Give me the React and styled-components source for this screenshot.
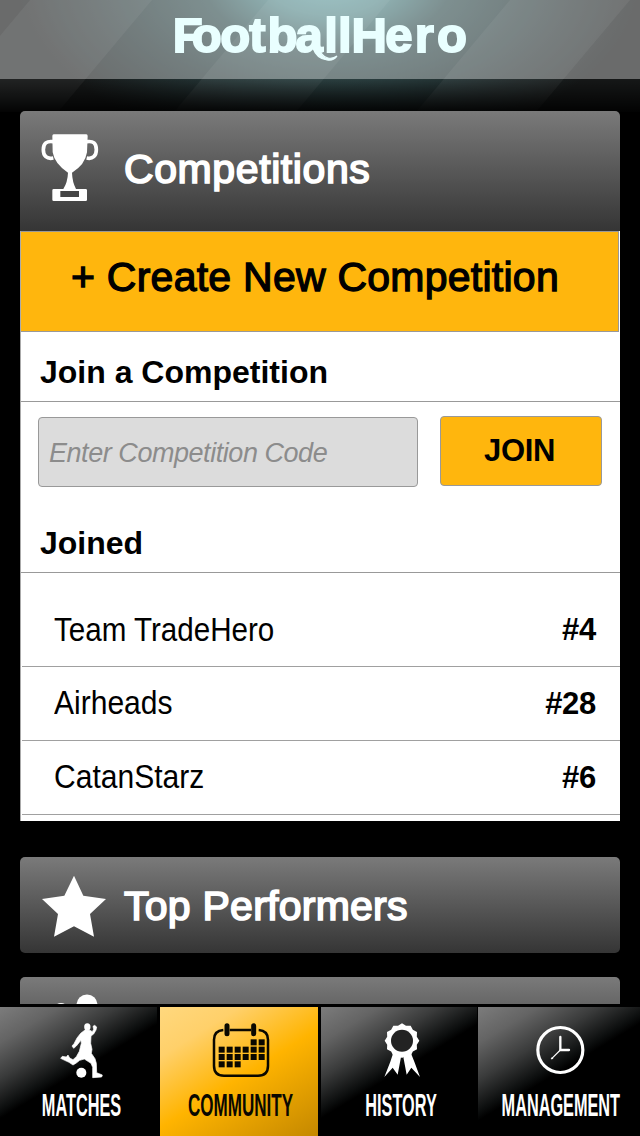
import React from "react";
import styled, { createGlobalStyle } from "styled-components";

const Global = createGlobalStyle`
  * { box-sizing: border-box; }
  body { margin: 0; background: #000; font-family: "Liberation Sans", Arial, sans-serif; }
`;

const Screen = styled.div`
  position: relative;
  width: 640px;
  height: 1136px;
  overflow: hidden;
  display: flex;
  flex-direction: column;
  background: #000;
`;

const Backdrop = styled.svg`
  position: absolute;
  inset: 0 auto auto 0;
`;

const Header = styled.header`
  position: relative;
  flex: none;
  height: 79px;
  background: rgba(255, 255, 255, 0.36);
`;

const Content = styled.main`
  position: relative;
  flex: none;
  height: 925px;
  padding: 32px 20px 0;
  overflow: hidden;
`;

const PanelHeader = styled.div`
  display: flex;
  align-items: center;
  height: ${(p) => p.$height}px;
  padding-left: 20px;
  padding-bottom: ${(p) => (p.$open ? 6 : 0)}px;
  border-radius: ${(p) => (p.$open ? "5px 5px 0 0" : "5px")};
  background: linear-gradient(#7a7a7a, #353535);
`;

const PanelIcon = styled.svg`
  flex: none;
  width: 68px;
  height: 70px;
`;

const PanelTitle = styled.h2`
  margin: 2px 0 0 16px;
  color: #fff;
  font-size: 41px;
  line-height: 46px;
  font-weight: 400;
  letter-spacing: ${(p) => p.$tracking}px;
  -webkit-text-stroke: 1.7px #fff;
`;

const Card = styled.section`
  height: 590px;
  margin-bottom: 36px;
  background: #fff;
  border-left: 1px solid #aaa;
  overflow: hidden;
`;

const CreateButton = styled.button`
  display: block;
  width: 598px;
  height: 101px;
  padding: 0 9px 10px 0;
  border: 1px solid #999;
  border-left: 0;
  background: #ffb60d;
  color: #000;
  font: 400 41px/46px "Liberation Sans", Arial, sans-serif;
  letter-spacing: 0.25px;
  -webkit-text-stroke: 1.3px #000;
`;

const SectionTitle = styled.h3`
  height: ${(p) => p.$height}px;
  margin: 0;
  padding: ${(p) => p.$top}px 0 0 19px;
  border-bottom: 1px solid #999;
  font-size: 32px;
  line-height: 36px;
  font-weight: 700;
`;

const JoinForm = styled.div`
  display: flex;
  gap: 22px;
  height: 117px;
  padding: 14px 0 0 17px;
`;

const CodeInput = styled.input`
  width: 380px;
  height: 70px;
  margin-top: 1px;
  padding: 2px 10px 0 10px;
  border: 1px solid #999;
  border-radius: 4px;
  outline: 0;
  background: #dcdcdc;
  font: italic 27px "Liberation Sans", Arial, sans-serif;
  letter-spacing: -0.45px;
  &::placeholder { color: #8c8c8c; opacity: 1; }
`;

const JoinButton = styled.button`
  width: 162px;
  height: 70px;
  padding: 0 3px 0 0;
  border: 1px solid #999;
  border-radius: 4px;
  background: #ffb60d;
  color: #000;
  font: 700 31px "Liberation Sans", Arial, sans-serif;
  letter-spacing: -0.4px;
`;

const TeamRow = styled.div`
  display: flex;
  justify-content: space-between;
  align-items: flex-end;
  height: ${(p) => p.$height}px;
  margin-left: 1px;
  padding: 0 24px 18px 32px;
  border-bottom: 1px solid #a0a0a0;
  line-height: 36px;
`;

const TeamName = styled.span`
  padding-bottom: ${(p) => p.$lift}px;
  font-size: 33px;
  transform: scaleX(${(p) => p.$squeeze});
  transform-origin: left;
`;

const Rank = styled.b`
  font-size: 31px;
  letter-spacing: -0.3px;
`;

const Spacer = styled.div`
  height: 24px;
`;

const NavBar = styled.nav`
  position: relative;
  flex: none;
  display: grid;
  grid-template-columns: 157px 158px 156px 162px;
  column-gap: 3px;
  height: 132px;
  padding-top: 3px;
  background: #000;
  & > :last-child { margin-left: -2px; }
`;

const Tab = styled.div`
  display: flex;
  flex-direction: column;
  align-items: center;
  padding-left: ${(p) => p.$offset || 0}px;
  color: ${(p) => (p.$active ? "#0a0800" : "#fff")};
  background: ${(p) =>
    p.$active
      ? "linear-gradient(148deg, #ffd87e 0%, #ffd06a 22%, #ffb400 53%, #c48800 100%)"
      : "linear-gradient(149deg, #7c7c7c 0%, #646464 16%, #3a3b3b 32%, #0c0e0e 46%, #000 50%)"};
`;

const TabIcon = styled.svg`
  flex: none;
  width: 70px;
  height: 70px;
  margin-top: 8px;
`;

const TabLabel = styled.span`
  margin-top: 4px;
  font-size: 31px;
  line-height: 34px;
  font-weight: 700;
  white-space: nowrap;
  transform: scaleX(${(p) => p.$squeeze});
`;

const rosette = Array.from({ length: 24 }, (_, i) => {
  const r = i % 2 ? 46 : 52;
  const a = (i * Math.PI) / 12;
  return `${245 + r * Math.cos(a)},${153 + r * Math.sin(a)}`;
}).join(" ");

const days = [
  [4, 5],
  [0, 1, 2, 3, 4, 5],
  [0, 1, 2, 3, 4, 5],
  [0, 1, 2],
];

const Stage = () => (
  <Backdrop width="640" height="112">
    <defs>
      <radialGradient id="glow" gradientUnits="userSpaceOnUse" cx="0" cy="0" r="1" gradientTransform="translate(328 -20) scale(310 175)">
        <stop offset="0" stopColor="#5f9fa2" />
        <stop offset="0.2" stopColor="#508587" />
        <stop offset="0.4" stopColor="#355152" />
        <stop offset="0.7" stopColor="#233233" />
        <stop offset="1" stopColor="#161818" />
      </radialGradient>
      <linearGradient id="fade" x1="0" y1="0" x2="0" y2="1">
        <stop offset="0.7" stopColor="#000" stopOpacity="0" />
        <stop offset="1" stopColor="#000" stopOpacity="0.9" />
      </linearGradient>
    </defs>
    <rect width="640" height="112" fill="url(#glow)" />
    <g fill="#fff" fillOpacity="0.055">
      <path d="M30 0H152L58 112H-64Z" />
      <path d="M268 0H390L296 112H174Z" />
      <path d="M510 0H630L536 112H416Z" />
    </g>
    <rect width="640" height="112" fill="url(#fade)" />
  </Backdrop>
);

const Logo = () => (
  <svg width="640" height="79">
    <g fill="#e9ffff" stroke="#e9ffff">
      <text
        y="47.7"
        x="158.4 175.9 202 228.6 245.4 271.2 297.4 310 322.6 353.5 380.6 401"
        transform="scale(1.09 1.08)"
        fontFamily="Liberation Sans"
        fontWeight="700"
        fontSize="45"
        strokeWidth="1.7"
      >
        FootballHero
      </text>
      <path strokeWidth="1.2" d="M317 44C319 51 322 57 328 58Q333 59 337 56Q334 61 327 60C320 59 315 54 313 48Z" />
    </g>
  </svg>
);

const Trophy = () => (
  <PanelIcon viewBox="120 97 204 210">
    <g fill="none" stroke="#fff" strokeWidth="11">
      <path d="M160 123C140 120 130 128 130 147S140 176 160 172" />
      <path d="M260 123C280 120 289 128 289 147S278 176 260 172" />
    </g>
    <path fill="#fff" d="M161 101H259Q263 101 263 106L261 155Q255 193 216 216Q217 244 228 265H257Q261 265 261 269V297Q261 301 257 301H161Q157 301 157 297V269Q157 265 161 265H190Q203 244 204 216Q164 190 158 155L157 106Q157 101 161 101Z" />
    <path fill="#454545" d="M181 271H237V289H181Z" />
  </PanelIcon>
);

const Star = () => (
  <PanelIcon viewBox="120 91 204 210">
    <path fill="#fff" d="M222 108L250 168L318 178L270 223L282 291L222 260L162 291L174 223L126 178L193 168Z" />
  </PanelIcon>
);

const Player = () => (
  <TabIcon viewBox="17 15 210 210" fill="currentColor">
    <ellipse cx="141" cy="51" rx="9.5" ry="11" />
    <path d="M134 60L149 61L156 65L160 58L158 49L163 46L169 51L167 60L160 72L152 78L151 100L155 118L153 130L164 146L168 160L169 188L186 195L184 201L157 203L157 172L152 160L132 147L118 151L108 159L98 165L86 157L73 151L61 145L66 139L78 141L83 135L88 144L98 149L108 140L117 124L123 100L122 91L116 98L108 108L100 115L95 108L101 101L110 84L121 70Z" stroke="currentColor" strokeWidth="2" strokeLinejoin="round" />
    <circle cx="123" cy="188" r="15" />
  </TabIcon>
);

const Calendar = () => (
  <TabIcon viewBox="619 76 210 210" fill="currentColor">
    <g fill="none" stroke="currentColor" strokeWidth="7.5">
      <path d="M671 121Q643 123 643 150V228Q643 258 673 258H775Q805 258 805 228V150Q805 123 777 121" />
      <path d="M690 121H754" />
      <path d="M682 108V132M762 108V132" strokeWidth="15" strokeLinecap="round" />
    </g>
    {days.map((cols, r) =>
      cols.map((c) => <rect key={`${r}-${c}`} x={657 + c * 24} y={149 + r * 22} width="18" height="18" />)
    )}
  </TabIcon>
);

const Ribbon = () => (
  <TabIcon viewBox="140 76 210 210" fill="currentColor">
    <polygon points={rosette} />
    <circle cx="245" cy="153" r="33" fill="#232323" />
    <path d="M220 186L243 197L232 255L217 234L192 262L210 216ZM270 186L248 197L259 255L273 234L299 262L282 216Z" />
  </TabIcon>
);

const Clock = () => (
  <TabIcon viewBox="619 76 210 210" fill="none" stroke="currentColor" strokeLinecap="round">
    <circle cx="722" cy="181" r="67.5" strokeWidth="9.5" />
    <path d="M722 142V181H748" strokeWidth="7" />
    <path d="M722 181L696 207" strokeWidth="3.5" />
    <circle cx="697" cy="206" r="2" strokeWidth="2" />
  </TabIcon>
);

const teams = [
  { name: "Team TradeHero", rank: "#4", height: 94, squeeze: 0.896, lift: 0 },
  { name: "Airheads", rank: "#28", height: 74, squeeze: 0.91, lift: 1 },
  { name: "CatanStarz", rank: "#6", height: 74, squeeze: 0.91, lift: 1 },
];

const tabs = [
  { label: "MATCHES", Icon: Player, squeeze: 0.525, offset: 5 },
  { label: "COMMUNITY", Icon: Calendar, squeeze: 0.55, offset: 4, active: true },
  { label: "HISTORY", Icon: Ribbon, squeeze: 0.525, offset: 5 },
  { label: "MANAGEMENT", Icon: Clock, squeeze: 0.525, offset: 1 },
];

export default function App() {
  return (
    <>
      <Global />
      <Screen>
        <Stage />
        <Header>
          <Logo />
        </Header>
        <Content>
          <PanelHeader $height={120} $open>
            <Trophy />
            <PanelTitle $tracking={0.6}>Competitions</PanelTitle>
          </PanelHeader>
          <Card>
            <CreateButton>+ Create New Competition</CreateButton>
            <SectionTitle $height={70} $top={22}>Join a Competition</SectionTitle>
            <JoinForm>
              <CodeInput placeholder="Enter Competition Code" />
              <JoinButton>JOIN</JoinButton>
            </JoinForm>
            <SectionTitle $height={54} $top={6}>Joined</SectionTitle>
            {teams.map((t) => (
              <TeamRow key={t.name} $height={t.height}>
                <TeamName $squeeze={t.squeeze} $lift={t.lift}>{t.name}</TeamName>
                <Rank>{t.rank}</Rank>
              </TeamRow>
            ))}
          </Card>
          <PanelHeader $height={96}>
            <Star />
            <PanelTitle $tracking={0.25}>Top Performers</PanelTitle>
          </PanelHeader>
          <Spacer />
          <PanelHeader $height={96}>
            <PanelIcon viewBox="0 0 68 70">
              <circle cx="47" cy="15" r="10.5" fill="#fff" />
              <circle cx="21" cy="20.5" r="7.5" fill="#fff" />
            </PanelIcon>
          </PanelHeader>
        </Content>
        <NavBar>
          {tabs.map(({ label, Icon, squeeze, offset, active }) => (
            <Tab key={label} $active={active} $offset={offset}>
              <Icon />
              <TabLabel $squeeze={squeeze}>{label}</TabLabel>
            </Tab>
          ))}
        </NavBar>
      </Screen>
    </>
  );
}
